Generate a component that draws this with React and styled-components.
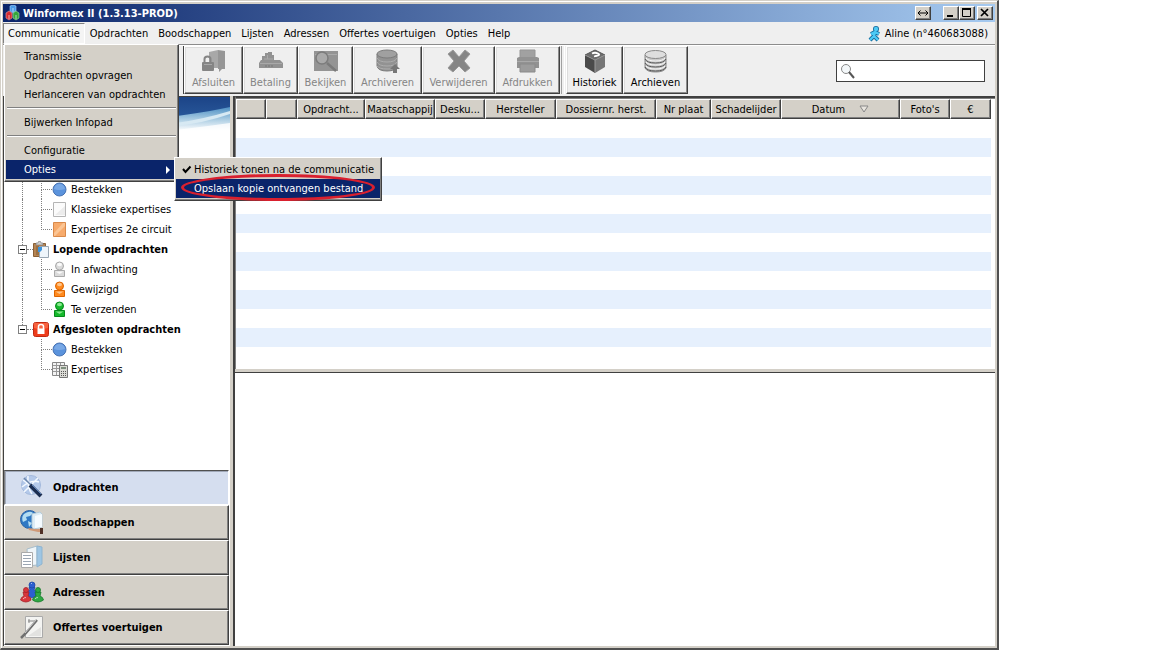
import React from "react";
import styled, { createGlobalStyle } from "styled-components";

const toolbarMain = [
  { label: "Afsluiten", icon: "close", width: 59 },
  { label: "Betaling", icon: "pay", width: 55 },
  { label: "Bekijken", icon: "view", width: 55 },
  { label: "Archiveren", icon: "archive", width: 69 },
  { label: "Verwijderen", icon: "remove", width: 73 },
  { label: "Afdrukken", icon: "print", width: 65 },
];

const toolbarExtra = [
  { label: "Historiek", icon: "history", width: 57 },
  { label: "Archieven", icon: "archives", width: 65 },
];

const menuItems = [
  "Opdrachten",
  "Boodschappen",
  "Lijsten",
  "Adressen",
  "Offertes voertuigen",
  "Opties",
  "Help",
];

const columns = [
  { label: "", width: 30 },
  { label: "", width: 31 },
  { label: "Opdracht...", width: 68 },
  { label: "Maatschappij", width: 70 },
  { label: "Desku...", width: 50 },
  { label: "Hersteller", width: 71 },
  { label: "Dossiernr. herst.", width: 100 },
  { label: "Nr plaat", width: 55 },
  { label: "Schadelijder", width: 70 },
  { label: "Datum", sorted: true },
  { label: "Foto's", width: 50 },
  { label: "€", width: 41 },
];

const tree = [
  { label: "Bestekken", icon: "ball" },
  { label: "Klassieke expertises", icon: "paper" },
  { label: "Expertises 2e circuit", icon: "orange", last: true },
  { label: "Lopende opdrachten", icon: "clipboard", group: true },
  { label: "In afwachting", icon: "userGrey" },
  { label: "Gewijzigd", icon: "userOrange" },
  { label: "Te verzenden", icon: "userGreen", last: true },
  { label: "Afgesloten opdrachten", icon: "lock", group: true, end: true },
  { label: "Bestekken", icon: "ball", end: true },
  { label: "Expertises", icon: "calc", last: true, end: true },
];

const sections = [
  { label: "Opdrachten", icon: "tools", active: true },
  { label: "Boodschappen", icon: "world" },
  { label: "Lijsten", icon: "lists" },
  { label: "Adressen", icon: "people" },
  { label: "Offertes voertuigen", icon: "offer" },
];

const person = (light, main, dark) => (
  <g fill={main} stroke={dark}>
    <path d="M2.500 9.500H12.500V15.500H2.500Z" />
    <path d="M3.500 10.500L7.500 13 11.500 10.500Z" fill={light} stroke="none" />
    <circle cx="7.500" cy="5" r="4" />
    <ellipse cx="7.500" cy="3.500" rx="2.500" ry="1.800" fill={light} stroke="none" />
  </g>
);

const treeIcons = {
  ball: (
    <>
      <circle cx="7.500" cy="8.500" r="6.500" fill="#5b93dc" stroke="#4672b4" />
      <path d="M2 8Q3 3 7.500 3T13 8Q7 10 2 8" fill="#8db7ec" opacity=".6" />
    </>
  ),
  paper: (
    <>
      <path d="M1.500 1.500H13.500V15.500H1.500Z" fill="#fbfbfb" stroke="#b5b5b5" />
      <path d="M3 14L13 5V14Z" fill="#ececec" />
    </>
  ),
  orange: (
    <>
      <path d="M1.500 1.500H13.500V15.500H1.500Z" fill="#f7ab6c" stroke="#d98a4b" />
      <path d="M2 12L11 2H13V5L3 15H2Z" fill="#fbc594" />
    </>
  ),
  clipboard: (
    <>
      <path d="M0.500 2.500H12.500V15.500H0.500Z" fill="#b58453" stroke="#8a6036" />
      <path d="M3 4V2H5L5.500 0.500H7.500L8 2H10V4Z" fill="#cfcfcf" stroke="#777" strokeWidth=".6" />
      <path d="M3 5H10V14H3Z" fill="#9a7044" />
      <path d="M6.500 5.500H15.500V16.500H6.500Z" fill="#eef5fb" stroke="#98a6b3" />
      <path d="M5 6H9V9L7 11H5Z" fill="#3b93dc" />
    </>
  ),
  userGrey: person("#fafafa", "#dadada", "#a9a9a9"),
  userOrange: person("#ffc58a", "#ff8a1f", "#dd6500"),
  userGreen: person("#8be890", "#16b92c", "#078a1b"),
  lock: (
    <>
      <rect x="0.500" y="1.500" width="15" height="14" rx="2" fill="#ee3d1c" stroke="#c12912" />
      <path d="M1 2H15V7Q7 9 1 7Z" fill="#ff7b55" opacity=".6" />
      <path d="M5.500 8V5.500Q5.500 3.500 8 3.500T10.500 5.500V8" fill="none" stroke="#fff" strokeWidth="1.500" />
      <path d="M4.500 7.500H11.500V13H4.500Z" fill="#fff" />
    </>
  ),
  calc: (
    <>
      <path d="M0.500 1.500H12.500V14.500H0.500Z" fill="#f3f3f3" stroke="#888" />
      <path d="M1 4.500H12M1 7.500H12M1 10.500H12M4.500 2V14M8.500 2V14" stroke="#999" />
      <path d="M7.500 4.500H15.500V16.500H7.500Z" fill="#dcdcd6" stroke="#777" />
      <path d="M9 7H14" stroke="#7e8f7e" strokeWidth="2" />
      <path d="M9 10.500H14M9 12.500H14M9 14.500H14" stroke="#555" strokeDasharray="1 1" />
    </>
  ),
};

const toolIcons = {
  close: (
    <g>
      <path d="M8 3L17 1V19H8Z" fill="#a8a8a8" />
      <path d="M17 1L24 2V20H21L18 23V20H17Z" fill="#969696" />
      <path d="M3.500 13V10Q3.500 7.500 6.500 7.500T9.500 10V13" fill="none" stroke="#858585" strokeWidth="2" />
      <rect x="1" y="13" width="12" height="9" rx="1" fill="#858585" />
      <path d="M3 15.500H11" stroke="#a8a8a8" />
    </g>
  ),
  pay: (
    <g fill="#929292">
      <path d="M4 11V7H7V4H10V3H14V6H16V11Z" />
      <path d="M3 11H22L25 14V19H1V14Z" />
      <path d="M2 14.500H24M6 10H15M9.500 6V10" stroke="#a9a9a9" fill="none" />
      <path d="M7 17H15" stroke="#777" strokeDasharray="2 1" />
    </g>
  ),
  view: (
    <g>
      <path d="M1 2H25V22H1Z" fill="#949494" />
      <path d="M2 5.500H24" stroke="#aaa" />
      <circle cx="9" cy="9" r="6" fill="#a9a9a9" stroke="#7c7c7c" strokeWidth="1.500" />
      <path d="M14 14L23 22" stroke="#7a7a7a" strokeWidth="2.500" />
    </g>
  ),
  archive: (
    <g fill="#929292" stroke="#7c7c7c">
      <path d="M2 5V17Q3 22 12 22T22 17V5Z" />
      <ellipse cx="12" cy="5" rx="10" ry="4" fill="#a0a0a0" />
      <path d="M2 9Q4 13 12 13T22 9M2 13Q4 17 12 17T22 13M2 17Q4 20 12 20T20 18" fill="none" stroke="#adadad" />
      <path d="M20 15L25 20H22V24H18V20H15Z" fill="#777" stroke="none" />
    </g>
  ),
  remove: (
    <path d="M2 5L7 1 13 8 19 1 24 5 18 12 24 19 19 23 13 17 7 23 2 19 8 12Z" fill="#858585" stroke="#999" />
  ),
  print: (
    <g>
      <path d="M5 1H20V10H5Z" fill="#a1a1a1" stroke="#959595" />
      <path d="M2 9L4 8H22L24 9V19H2Z" fill="#929292" />
      <path d="M5 15H20V23H5Z" fill="#9c9c9c" stroke="#8a8a8a" />
      <path d="M2 12.500H24" stroke="#a9a9a9" />
    </g>
  ),
  history: (
    <g>
      <path d="M13 1L23 6 13 11 3 6Z" fill="#6c6c6c" stroke="#555" />
      <path d="M3 6L13 11V24L3 18Z" fill="#4a4a4a" />
      <path d="M23 6L13 11V24L23 18Z" fill="#767676" />
      <path d="M3 6L13 11 23 6M13 11V23" fill="none" stroke="#999" />
      <path d="M10 4.500Q13 3 16 4.500T14 7L12 7.500" fill="none" stroke="#fff" strokeWidth="1.800" />
    </g>
  ),
  archives: (
    <g fill="#c9c9c9" stroke="#8a8a8a">
      <path d="M2 6V19Q4 23 12.500 23T23 19V6Z" />
      <ellipse cx="12.500" cy="5.500" rx="10.500" ry="4" fill="#dedede" />
      <path d="M2 10Q4 14 12.500 14T23 10M2 14Q4 18 12.500 18T23 14M2 18Q4 22 12.500 22T23 18" fill="none" stroke="#555" />
      <path d="M3 9Q5 12 12.500 12T22 9M3 13Q5 16 12.500 16T22 13M3 17Q5 20 12.500 20T22 17" fill="none" stroke="#f7f7f7" />
    </g>
  ),
};

const sectionIcons = {
  tools: (
    <>
      <circle cx="11" cy="10" r="9.500" fill="#b4c9ea" stroke="#a3b9dc" />
      <path d="M3 5L18 16M2 12Q11 4 19 7M8 1Q7 12 12 19M4 17L18 3" stroke="#f4f9ff" strokeWidth="1.500" fill="none" />
      <path d="M4 3L14 13" stroke="#6c86ab" strokeWidth="1.500" />
      <path d="M10 10L21 21" stroke="#1d2f52" strokeWidth="4" />
      <path d="M12 10L21 19" stroke="#5a80b8" />
    </>
  ),
  world: (
    <>
      <circle cx="9.500" cy="9.500" r="9" fill="#2f78c4" stroke="#2a62a4" />
      <path d="M4 4Q10 0 13 3L10 6 6 7 7 10 3 12Q1 7 4 4M8 11L12 13 9 17Z" fill="#b2dcf2" />
      <path d="M12 4L20 2 22 4V17L14 19 12 17Z" fill="#ddecf5" stroke="#b5ccdb" />
      <path d="M15 6L22 4V17L15 18Z" fill="#f5fbff" />
      <path d="M8 18L14 19 20 19V22L18 22 9 20Z" fill="#d09a78" />
      <path d="M20 18H23V24H20Z" fill="#503026" />
    </>
  ),
  lists: (
    <>
      <path d="M7 4L17 1V20L8 21Z" fill="#eef5f9" stroke="#a7bdcb" />
      <path d="M17 1L22 2V19L17 22Z" fill="#9ec6e4" stroke="#8fb4cf" />
      <path d="M1.500 7.500H12.500V22.500H1.500Z" fill="#fff" stroke="#aaa" />
      <path d="M3 10.500H11M3 13.500H11M3 16.500H11M3 19.500H11" stroke="#9ba6b3" />
    </>
  ),
  people: (
    <>
      <g fill="#2c5fd0" stroke="#204aa8" strokeWidth=".8">
        <path d="M6 15Q6 11 10 10L9 7H15L14 10Q18 11 18 15L12 18Z" />
        <circle cx="12" cy="5" r="3" />
      </g>
      <g fill="#d8363c" stroke="#a8222a" strokeWidth=".8">
        <path d="M0.500 20Q1 17 4 16L3 12H9L8 16Q11 17 11 20Q6 24 0.500 20" />
        <circle cx="6" cy="10" r="2.500" />
      </g>
      <g fill="#2ea843" stroke="#157a2a" strokeWidth=".8">
        <path d="M12.500 20Q13 17 16 16L15 12H21L20 16Q23 17 23.500 20Q18 24 12.500 20" />
        <circle cx="18" cy="10" r="2.500" />
      </g>
      <path d="M3 19Q4 17.500 6 17.500M15 19Q16 17.500 18 17.500M11 4L12 3" stroke="#fff" opacity=".6" fill="none" />
    </>
  ),
  offer: (
    <>
      <path d="M5.500 1.500H22.500V22.500H5.500Z" fill="#f4f4f2" stroke="#aaa" />
      <path d="M8 21L21 12V21Z" fill="#e2e2e0" />
      <path d="M8 6H17M9 4V8" stroke="#888" />
      <path d="M17 5L6 18 1 23" stroke="#707070" strokeWidth="2.500" fill="none" />
      <path d="M16 5L5 18" stroke="#ccc" />
    </>
  ),
};

const TreeEntry = ({ item }) => (
  <TreeRow $bold={item.group}>
    {item.group ? (
      <>
        <Expander>
          <Stem />
          <ToggleButton aria-label={item.label}>
            <svg width="7" height="7">
              <path d="M1 3.500H6" stroke="#000" />
            </svg>
          </ToggleButton>
          <Stem $hidden={item.end} />
        </Expander>
        <Dash />
      </>
    ) : (
      <>
        <Trunk $hidden={item.end} />
        <Branch>
          <Elbow />
          {!item.last && <Stem />}
        </Branch>
      </>
    )}
    <svg width="16" height="17">
      {treeIcons[item.icon]}
    </svg>
    <span>{item.label}</span>
  </TreeRow>
);

const ToolButtons = ({ items, disabled }) =>
  items.map((item) => (
    <ToolButton key={item.label} $width={item.width} disabled={disabled}>
      <svg width="26" height="25">
        {toolIcons[item.icon]}
      </svg>
      {item.label}
    </ToolButton>
  ));

const App = () => {
  return (
    <>
      <GlobalStyle />
      <Window>
        <TitleBar>
          <svg width="16" height="16">
            <path d="M5 1L8 0 11 1V6L8 8 5 6Z" fill="#4b9be8" stroke="#a8d4ff" strokeWidth=".6" />
            <path d="M1 8L4 6 7 8V13L4 15 1 13Z" fill="#d42a31" stroke="#f29da0" strokeWidth=".6" />
            <path d="M8 8L11 6 14 8V13L11 15 8 13Z" fill="#33a53c" stroke="#a7e0aa" strokeWidth=".6" />
            <path d="M4 10V14M11 10V14M8 3V7" stroke="#fff" opacity=".6" />
          </svg>
          <h1>Winformex II (1.3.13-PROD)</h1>
          <WindowButtons>
            <WindowButton aria-label="Resize" $gap={12}>
              <svg width="12" height="10">
                <path d="M1 5H11M3.500 2.500L1 5 3.500 7.500M8.500 2.500L11 5 8.500 7.500" fill="none" stroke="#000" />
              </svg>
            </WindowButton>
            <WindowButton aria-label="Minimize">
              <svg width="12" height="10">
                <path d="M2 8H8" stroke="#000" strokeWidth="2" />
              </svg>
            </WindowButton>
            <WindowButton aria-label="Maximize" $gap={2}>
              <svg width="12" height="10">
                <path d="M1.500 1V8.500H9.500V1" fill="none" stroke="#000" />
                <path d="M1 1H10" stroke="#000" strokeWidth="2" />
              </svg>
            </WindowButton>
            <WindowButton aria-label="Close">
              <svg width="12" height="10">
                <path d="M2 1L9 8M9 1L2 8" stroke="#000" strokeWidth="1.700" />
              </svg>
            </WindowButton>
          </WindowButtons>
        </TitleBar>

        <MenuBar>
          <MenuAnchor>
            <MenuTitle $open>Communicatie</MenuTitle>
            <Popup>
              <MenuItem>Transmissie</MenuItem>
              <MenuItem>Opdrachten opvragen</MenuItem>
              <MenuItem>Herlanceren van opdrachten</MenuItem>
              <Separator />
              <MenuItem>Bijwerken Infopad</MenuItem>
              <Separator />
              <MenuItem>Configuratie</MenuItem>
              <MenuItem $active>
                Opties
                <svg width="6" height="10">
                  <path d="M1 1V9L5 5Z" fill="#fff" />
                </svg>
              </MenuItem>
              <SubMenu>
                <MenuItem $check>
                  <svg width="10" height="10">
                    <path d="M1 4L3.500 7 8.500 1.500" fill="none" stroke="#000" strokeWidth="2" />
                  </svg>
                  Historiek tonen na de communicatie
                </MenuItem>
                <MenuItem $active>Opslaan kopie ontvangen bestand</MenuItem>
                <Marker />
              </SubMenu>
            </Popup>
          </MenuAnchor>
          {menuItems.map((item) => (
            <MenuTitle key={item}>{item}</MenuTitle>
          ))}
          <User>
            <svg width="16" height="16">
              <g fill="none" stroke="#14699b" strokeWidth="4" strokeLinejoin="round">
                <path d="M8 6L7 10 3 14M7 10L11 14M4 8L8 6 12 8" />
                <circle cx="9" cy="3" r="1" />
              </g>
              <g fill="none" stroke="#4cc9f5" strokeWidth="2.400">
                <path d="M8 6L7 10 3 14M7 10L11 14M4 8L8 6 12 8" />
                <circle cx="9" cy="3" r="1" />
              </g>
            </svg>
            Aline (n°460683088)
          </User>
        </MenuBar>

        <Toolbar>
          <Gutter />
          <ToolButtons items={toolbarMain} disabled />
          <ToolDivider />
          <ToolButtons items={toolbarExtra} />
          <Search>
            <svg width="16" height="16">
              <circle cx="6" cy="6" r="4.500" fill="#f4f8fa" stroke="#888" />
              <path d="M9 9L14 15" stroke="#555" strokeWidth="2" />
            </svg>
            <input type="text" aria-label="Zoeken" />
          </Search>
        </Toolbar>

        <Body>
          <Sidebar>
            <Banner viewBox="0 0 226 34" preserveAspectRatio="none">
              <defs>
                <linearGradient id="sky" x1="0" y1="0" x2="0" y2="1">
                  <stop offset="0" stopColor="#1c4487" />
                  <stop offset="1" stopColor="#2f63a5" />
                </linearGradient>
                <linearGradient id="haze" x1="0" y1="0" x2="0" y2="1">
                  <stop offset="0" stopColor="#4d8fc4" />
                  <stop offset=".5" stopColor="#a8cbe2" />
                  <stop offset="1" stopColor="#fff" />
                </linearGradient>
              </defs>
              <path d="M0 0H226V34H0Z" fill="url(#sky)" />
              <path d="M0 34Q150 26 226 10V34Z" fill="url(#haze)" />
              <path d="M172 26Q200 22 226 14V17Q200 26 172 29Z" fill="#d7e9f3" />
              <path d="M172 33Q205 29 226 26V34H172Z" fill="#fff" opacity=".8" />
            </Banner>
            <Tree>
              {tree.map((item, i) => (
                <TreeEntry key={i} item={item} />
              ))}
            </Tree>
            <Sections>
              {sections.map((item) => (
                <SectionButton key={item.label} $active={item.active}>
                  <svg width="24" height="25">
                    {sectionIcons[item.icon]}
                  </svg>
                  {item.label}
                </SectionButton>
              ))}
            </Sections>
          </Sidebar>

          <Main>
            <ListPane>
              <Table>
                <colgroup>
                  {columns.map((col, i) => (
                    <Column key={i} $width={col.width} />
                  ))}
                </colgroup>
                <thead>
                  <tr>
                    {columns.map((col, i) => (
                      <th key={i} scope="col">
                        {col.label}
                        {col.sorted && (
                          <svg width="10" height="8">
                            <path d="M1 1H9L5 7Z" fill="#e8e5df" stroke="#888" />
                          </svg>
                        )}
                      </th>
                    ))}
                  </tr>
                </thead>
                <tbody>
                  {Array.from({ length: 13 }, (_, i) => (
                    <tr key={i}>
                      <td colSpan={columns.length} />
                    </tr>
                  ))}
                </tbody>
              </Table>
            </ListPane>
            <DetailPane />
          </Main>
        </Body>
      </Window>
    </>
  );
};

const GlobalStyle = createGlobalStyle`
  * {
    box-sizing: border-box;
  }
  body {
    margin: 0;
    background: #fff;
    color: #000;
    overflow: hidden;
  }
  body, button, input {
    font-family: "DejaVu Sans Condensed", "DejaVu Sans", sans-serif;
    font-size: 11px;
    line-height: 15px;
  }
  button {
    color: inherit;
    border-radius: 0;
    white-space: nowrap;
  }
  svg {
    display: block;
    flex: none;
  }
`;

const Window = styled.div`
  display: flex;
  flex-direction: column;
  height: 100vh;
  margin-right: 153px;
  padding: 3px 2px 2px;
  background: #d4d0c8;
  border: 1px solid #d4d0c8;
  border-right: 2px solid #505050;
  border-bottom: 2px solid #505050;
  box-shadow: inset 1px 1px #fff;
`;

const TitleBar = styled.header`
  display: flex;
  align-items: center;
  gap: 2px;
  height: 18px;
  padding: 0 2px;
  color: #fff;
  background: linear-gradient(90deg, #0a246a, #a6caf0);

  h1 {
    margin: 0;
    padding-top: 1px;
    font-size: 11px;
  }
`;

const WindowButtons = styled.div`
  display: flex;
  margin-left: auto;
`;

const WindowButton = styled.button`
  display: flex;
  width: 16px;
  height: 14px;
  padding: 1px;
  margin-right: ${({ $gap }) => $gap || 0}px;
  background: #d4d0c8;
  border: 1px solid;
  border-color: #fff #404040 #404040 #fff;
  box-shadow: inset -1px -1px #808080;
`;

const MenuBar = styled.nav`
  display: flex;
  height: 23px;
  padding-top: 1px;
  background: #efefef;
  border-bottom: 1px solid #8c8c8c;
`;

const MenuAnchor = styled.div`
  display: flex;
  position: relative;
`;

const MenuTitle = styled.button`
  padding: 0 4px;
  background: ${({ $open }) => ($open ? "#f4f4f4" : "none")};
  border: 1px solid transparent;
  border-color: ${({ $open }) =>
    $open ? "#808080 #fff #fff #808080" : "transparent"};
`;

const Popup = styled.div`
  position: absolute;
  z-index: 10;
  top: 100%;
  left: 1px;
  width: 175px;
  padding: 2px 1px;
  background: #d4d0c8;
  border: 1px solid;
  border-color: #fff #404040 #404040 #fff;
  box-shadow: inset -1px -1px #808080;
`;

const MenuItem = styled.button`
  display: flex;
  align-items: center;
  justify-content: space-between;
  width: 100%;
  height: 19px;
  padding: 0 6px 0 18px;
  border: none;
  text-align: left;
  color: ${({ $active }) => ($active ? "#fff" : "#000")};
  background: ${({ $active }) => ($active ? "#0a246a" : "none")};
  ${({ $check }) =>
    $check && "justify-content: flex-start; gap: 2px; padding-left: 6px;"}
`;

const Separator = styled.hr`
  height: 2px;
  margin: 3px 1px 4px;
  border: none;
  border-top: 1px solid #808080;
  border-bottom: 1px solid #fff;
`;

const SubMenu = styled.div`
  position: absolute;
  top: 112px;
  left: 169px;
  width: 208px;
  padding: 2px 1px;
  background: #d4d0c8;
  border: 1px solid;
  border-color: #fff #404040 #404040 #fff;
  box-shadow: inset -1px -1px #808080;
`;

const Marker = styled.span`
  position: absolute;
  right: 6px;
  bottom: -1px;
  width: 194px;
  height: 27px;
  border: 3px solid #d9202e;
  border-radius: 50%;
`;

const User = styled.div`
  display: flex;
  align-items: center;
  gap: 2px;
  margin-left: auto;
  padding-right: 7px;
`;

const Toolbar = styled.div`
  display: flex;
  height: 51px;
  padding-bottom: 2px;
  background: #efefef;
  border-top: 1px solid #fff;
`;

const Gutter = styled.div`
  width: 181px;
  border-right: 1px solid #404040;
`;

const ToolButton = styled.button`
  display: flex;
  flex-direction: column;
  align-items: center;
  gap: 1px;
  width: ${({ $width }) => $width}px;
  padding: 2px 0 0;
  background: #efefef;
  border: 1px solid;
  border-color: #fff #404040 #404040 #fff;
  box-shadow: inset -1px -1px #8c8c8c, inset 1px 1px #dcdcdc;

  &:disabled {
    color: #858585;
  }
`;

const ToolDivider = styled.div`
  width: 4px;
  margin: 0 1px;
  border-left: 1px solid #a0a0a0;
  border-right: 1px solid #fff;
`;

const Search = styled.label`
  display: flex;
  align-items: center;
  align-self: center;
  width: 149px;
  height: 22px;
  margin-top: 2px;
  margin-left: auto;
  margin-right: 10px;
  padding-left: 3px;
  background: #fff;
  border: 1px solid #404040;

  input {
    flex: 1;
    min-width: 0;
    border: none;
    outline: none;
    background: none;
  }
`;

const Body = styled.div`
  display: flex;
  flex: 1;
  min-height: 0;
`;

const Sidebar = styled.aside`
  display: flex;
  flex-direction: column;
  width: 227px;
  background: #fff;
  border-left: 1px solid #404040;
  border-top: 1px solid #404040;
`;

const Banner = styled.svg`
  width: 100%;
  height: 34px;
`;

const Tree = styled.ul`
  flex: 1;
  margin: 0;
  padding: 48px 0 0 14px;
  list-style: none;
`;

const TreeRow = styled.li`
  display: flex;
  align-items: center;
  height: 20px;
  font-weight: ${({ $bold }) => ($bold ? "bold" : "normal")};

  span {
    margin-left: ${({ $bold }) => ($bold ? 4 : 3)}px;
  }
`;

const Expander = styled.div`
  display: flex;
  flex-direction: column;
  align-items: center;
  width: 9px;
  height: 100%;
`;

const Stem = styled.div`
  flex: 1;
  width: 1px;
  border-left: 1px dotted ${({ $hidden }) => ($hidden ? "transparent" : "#808080")};
`;

const ToggleButton = styled.button`
  width: 9px;
  height: 9px;
  padding: 0;
  background: #fff;
  border: 1px solid #808080;
`;

const Dash = styled.div`
  width: 6px;
  border-top: 1px dotted #808080;
`;

const Trunk = styled.div`
  width: 19px;
  height: 100%;
  margin-left: 4px;
  border-left: 1px dotted ${({ $hidden }) => ($hidden ? "transparent" : "#808080")};
`;

const Branch = styled.div`
  display: flex;
  flex-direction: column;
  width: 11px;
  height: 100%;
`;

const Elbow = styled.div`
  height: 11px;
  border-left: 1px dotted #808080;
  border-bottom: 1px dotted #808080;
`;

const Sections = styled.div`
  display: flex;
  flex-direction: column;
  padding: 0 1px 1px 0;
`;

const SectionButton = styled.button`
  display: flex;
  align-items: center;
  gap: 9px;
  height: 35px;
  padding: 0 0 0 15px;
  font-weight: bold;
  background: ${({ $active }) => ($active ? "#d5deef" : "#d4d0c8")};
  border: 1px solid;
  border-color: ${({ $active }) =>
    $active ? "#505050 #fff #fff #808080" : "#fff #404040 #404040 #fff"};
  box-shadow: ${({ $active }) =>
    $active ? "inset 1px 1px #a0a8b8" : "inset -1px -1px #808080"};
`;

const Main = styled.main`
  display: flex;
  flex: 1;
  flex-direction: column;
  min-width: 0;
  border-left: 3px solid #d4d0c8;
  box-shadow: inset 2px 0 #404040;
  padding-left: 2px;
  background: #fff;
`;

const ListPane = styled.section`
  flex: 0 0 273px;
  overflow: hidden;
  padding-right: 4px;
  border-top: 2px solid #404040;
  border-left: 1px solid #808080;
  box-shadow: inset 0 1px #808080;
  padding-top: 1px;
`;

const Table = styled.table`
  width: 100%;
  table-layout: fixed;
  border-collapse: separate;
  border-spacing: 0;

  th {
    height: 20px;
    padding: 0;
    font-weight: normal;
    white-space: nowrap;
    background: #d4d0c8;
    border: 1px solid;
    border-color: #fff #404040 #404040 #fff;
    box-shadow: inset -1px -1px #808080;
  }
  th svg {
    display: inline-block;
    margin-left: 14px;
  }
  td {
    height: 19px;
    padding: 0;
  }
  tbody tr:nth-child(even) {
    background: #e6f0fd;
  }
`;

const Column = styled.col`
  width: ${({ $width }) => ($width ? `${$width}px` : "auto")};
`;

const DetailPane = styled.section`
  flex: 1;
  border-top: 3px solid #d4d0c8;
  box-shadow: inset 0 1px #404040;
`;

export default App;
